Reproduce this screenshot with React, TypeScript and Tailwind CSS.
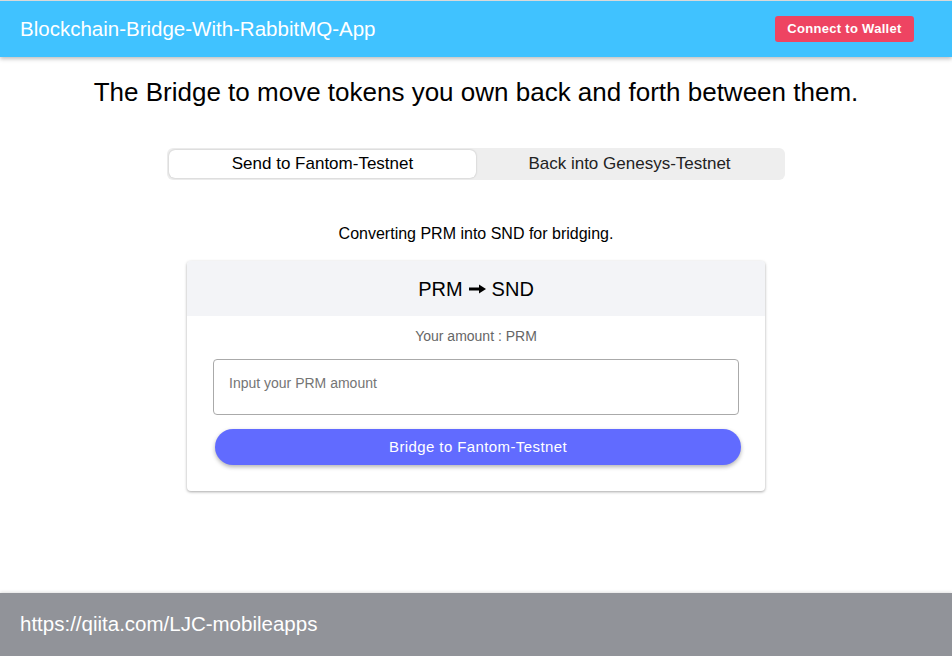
import React from 'react';

const App: React.FC = () => {
  return (
    <div className="flex min-h-[656px] flex-col bg-white font-['Liberation_Sans',Arial,sans-serif] text-black">
      <header className="relative z-10 border-t border-[#d9d9d9] bg-[#40c2ff] shadow-[0_2px_4px_rgba(0,0,0,0.25)]">
        <div className="flex h-[56px] items-center justify-between pl-5 pr-[38px]">
          <span className="text-[20.5px] text-white">Blockchain-Bridge-With-RabbitMQ-App</span>
          <button className="h-[26px] w-[139px] rounded-[3px] bg-[#ee4462] text-[13px] font-bold tracking-[0.3px] text-white">
            Connect to Wallet
          </button>
        </div>
      </header>

      <main className="flex flex-1 flex-col items-center">
        <h1 className="mt-[18px] text-[26px] leading-[34px]">
          The Bridge to move tokens you own back and forth between them.
        </h1>

        <div className="mt-[39px] grid h-[32px] w-[618px] grid-cols-2 rounded-[6px] bg-[#eeeeee] p-[2px] text-[17px]">
          <button className="rounded-[6px] bg-white shadow-[0_0_2px_rgba(0,0,0,0.25)]">Send to Fantom-Testnet</button>
          <button className="text-[#222]">Back into Genesys-Testnet</button>
        </div>

        <p className="mt-[44px] text-[16px] leading-[20px]">Converting PRM into SND for bridging.</p>

        <div className="mt-[17px] w-[578px] overflow-hidden rounded-[4px] bg-white shadow-[0_1px_3px_rgba(0,0,0,0.35)]">
          <div className="flex h-[55px] items-center justify-center bg-[#f3f4f7] text-[20px]">
            <span>PRM</span>
            <svg width="17" height="10" viewBox="0 0 17 10" className="mx-[6px] mt-[1px]">
              <rect x="0" y="3.5" width="11" height="3" fill="#000" />
              <polygon points="10,0.5 17,5 10,9.5" fill="#000" />
            </svg>
            <span>SND</span>
          </div>
          <div className="flex flex-col items-center px-[26px] pb-[26px]">
            <p className="mt-[12px] text-[14px] leading-[16px] text-[#666]">Your amount : PRM</p>
            <div className="mt-[15px] flex h-[56px] w-full items-start rounded-[4px] border border-[#aaaaaa] px-[15px] pt-[15px]">
              <span className="text-[14px] leading-[16px] text-[#757575]">Input your PRM amount</span>
            </div>
            <button className="mt-[14px] ml-[4px] h-[36px] w-[526px] rounded-full bg-[#616bff] text-[15px] tracking-[0.4px] text-white shadow-[0_2px_4px_rgba(0,0,0,0.3)]">
              Bridge to Fantom-Testnet
            </button>
          </div>
        </div>
      </main>

      <footer className="flex h-[63px] items-center bg-[#919399] pl-5 shadow-[0_-1px_3px_rgba(0,0,0,0.12)]">
        <span className="text-[20.5px] text-white">https://qiita.com/LJC-mobileapps</span>
      </footer>
    </div>
  );
};

export default App;
